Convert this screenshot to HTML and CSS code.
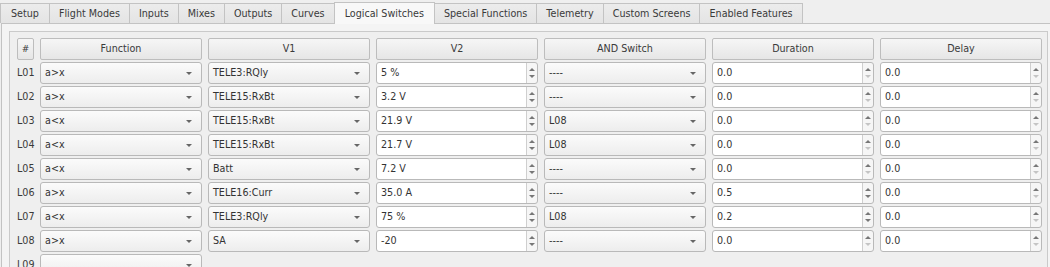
FILE: index.html
```html
<!DOCTYPE html>
<html lang="en">
<head>
    <meta charset="UTF-8">
    <title>Logical Switches</title>
    <link rel="stylesheet" href="styles.css">
</head>
<body>

    <div class="tabbar">
        <div class="tab">Setup</div>
        <div class="tab">Flight Modes</div>
        <div class="tab">Inputs</div>
        <div class="tab">Mixes</div>
        <div class="tab">Outputs</div>
        <div class="tab">Curves</div>
        <div class="tab active">Logical Switches</div>
        <div class="tab">Special Functions</div>
        <div class="tab">Telemetry</div>
        <div class="tab">Custom Screens</div>
        <div class="tab">Enabled Features</div>
    </div>

    <div class="pane">
        <div class="frame">
            <div class="grid">
                <div class="head small">#</div>
                <div class="head">Function</div>
                <div class="head">V1</div>
                <div class="head">V2</div>
                <div class="head">AND Switch</div>
                <div class="head">Duration</div>
                <div class="head">Delay</div>

                <!-- L01 -->
                <div class="label">L01</div>
                <div class="combo">a&gt;x</div>
                <div class="combo">TELE3:RQly</div>
                <div class="spin">5 %</div>
                <div class="combo">----</div>
                <div class="spin at-min">0.0</div>
                <div class="spin at-min">0.0</div>

                <!-- L02 -->
                <div class="label">L02</div>
                <div class="combo">a&gt;x</div>
                <div class="combo">TELE15:RxBt</div>
                <div class="spin">3.2 V</div>
                <div class="combo">----</div>
                <div class="spin at-min">0.0</div>
                <div class="spin at-min">0.0</div>

                <!-- L03 -->
                <div class="label">L03</div>
                <div class="combo">a&lt;x</div>
                <div class="combo">TELE15:RxBt</div>
                <div class="spin">21.9 V</div>
                <div class="combo">L08</div>
                <div class="spin at-min">0.0</div>
                <div class="spin at-min">0.0</div>

                <!-- L04 -->
                <div class="label">L04</div>
                <div class="combo">a&lt;x</div>
                <div class="combo">TELE15:RxBt</div>
                <div class="spin">21.7 V</div>
                <div class="combo">L08</div>
                <div class="spin at-min">0.0</div>
                <div class="spin at-min">0.0</div>

                <!-- L05 -->
                <div class="label">L05</div>
                <div class="combo">a&lt;x</div>
                <div class="combo">Batt</div>
                <div class="spin">7.2 V</div>
                <div class="combo">----</div>
                <div class="spin at-min">0.0</div>
                <div class="spin at-min">0.0</div>

                <!-- L06 -->
                <div class="label">L06</div>
                <div class="combo">a&gt;x</div>
                <div class="combo">TELE16:Curr</div>
                <div class="spin">35.0 A</div>
                <div class="combo">----</div>
                <div class="spin">0.5</div>
                <div class="spin at-min">0.0</div>

                <!-- L07 -->
                <div class="label">L07</div>
                <div class="combo">a&lt;x</div>
                <div class="combo">TELE3:RQly</div>
                <div class="spin">75 %</div>
                <div class="combo">L08</div>
                <div class="spin">0.2</div>
                <div class="spin at-min">0.0</div>

                <!-- L08 -->
                <div class="label">L08</div>
                <div class="combo">a&gt;x</div>
                <div class="combo">SA</div>
                <div class="spin">-20</div>
                <div class="combo">----</div>
                <div class="spin at-min">0.0</div>
                <div class="spin at-min">0.0</div>

                <!-- L09 -->
                <div class="label">L09</div>
                <div class="combo"></div>
            </div>
        </div>
    </div>

</body>
</html>
```

FILE: styles.css
```css
* {
    margin: 0;
    padding: 0;
    box-sizing: border-box;
}
body {
    background-color: #efefef;
    color: #333;
    font-family: "DejaVu Sans", sans-serif;
    font-size: 9.6px;
    width: 1050px;
    height: 267px;
    overflow: hidden;
}
.tabbar {
    display: flex;
    align-items: flex-end;
    height: 23px;
    padding-top: 3px;
    position: relative;
    z-index: 1;
}
.tab {
    height: 20px;
    line-height: 19px;
    padding: 0 9px;
    border: 1px solid #c3c3c3;
    border-bottom: none;
    border-left: none;
    background: linear-gradient(#ececec, #e4e4e4);
    color: #3a3a3a;
    white-space: nowrap;
}
.tab:first-child {
    border-left: 1px solid #c3c3c3;
    padding: 0 10px;
}
.tab.active {
    height: 22px;
    line-height: 21px;
    margin-bottom: -1px;
    padding: 0 10px;
    background: #f8f8f8;
    border-left: 1px solid #c3c3c3;
    margin-left: -1px;
}
.pane {
    border: 1px solid #c3c3c3;
    border-right: none;
    margin-left: 1px;
    background-color: #f4f4f4;
    padding: 7px 2px 0 7px;
    height: 250px;
}
.frame {
    border: 1px solid #cacaca;
    border-bottom: none;
    background-color: #efefef;
    padding: 6px 5px 0 7px;
    height: 240px;
}
.grid {
    display: grid;
    grid-template-columns: 17px repeat(6, 162px);
    grid-auto-rows: 22px;
    column-gap: 6px;
    row-gap: 2px;
}
.head {
    border: 1px solid #bdbdbd;
    border-radius: 2px;
    background: linear-gradient(#f6f6f6, #e6e6e6);
    text-align: center;
    line-height: 20px;
    color: #3a3a3a;
}
.head.small {
    font-size: 9px;
}
.label {
    line-height: 22px;
    white-space: nowrap;
    color: #3a3a3a;
}
.combo {
    position: relative;
    border: 1px solid #b9b9b9;
    border-radius: 3px;
    background: linear-gradient(#fbfbfb, #ededed);
    line-height: 20px;
    padding-left: 4px;
    white-space: nowrap;
}
/* little dropdown arrow */
.combo::after {
    content: "";
    position: absolute;
    right: 9px;
    top: 9px;
    border-left: 3px solid transparent;
    border-right: 3px solid transparent;
    border-top: 3px solid #666;
}
.spin {
    position: relative;
    border: 1px solid #b9b9b9;
    border-radius: 3px;
    background:
        linear-gradient(#cfcfcf, #cfcfcf) no-repeat right 10px top 0 / 1px 100%,
        linear-gradient(90deg, #fff, #fff) no-repeat left top / calc(100% - 11px) 100%,
        #f6f6f6;
    line-height: 20px;
    padding-left: 4px;
    white-space: nowrap;
}
/* up arrow */
.spin::before {
    content: "";
    position: absolute;
    right: 2px;
    top: 5px;
    border-left: 3px solid transparent;
    border-right: 3px solid transparent;
    border-bottom: 3px solid #777;
}
/* down arrow */
.spin::after {
    content: "";
    position: absolute;
    right: 2px;
    top: 12px;
    border-left: 3px solid transparent;
    border-right: 3px solid transparent;
    border-top: 3px solid #777;
}
.spin.at-min::after {
    border-top-color: #c4c4c4;
}
```
